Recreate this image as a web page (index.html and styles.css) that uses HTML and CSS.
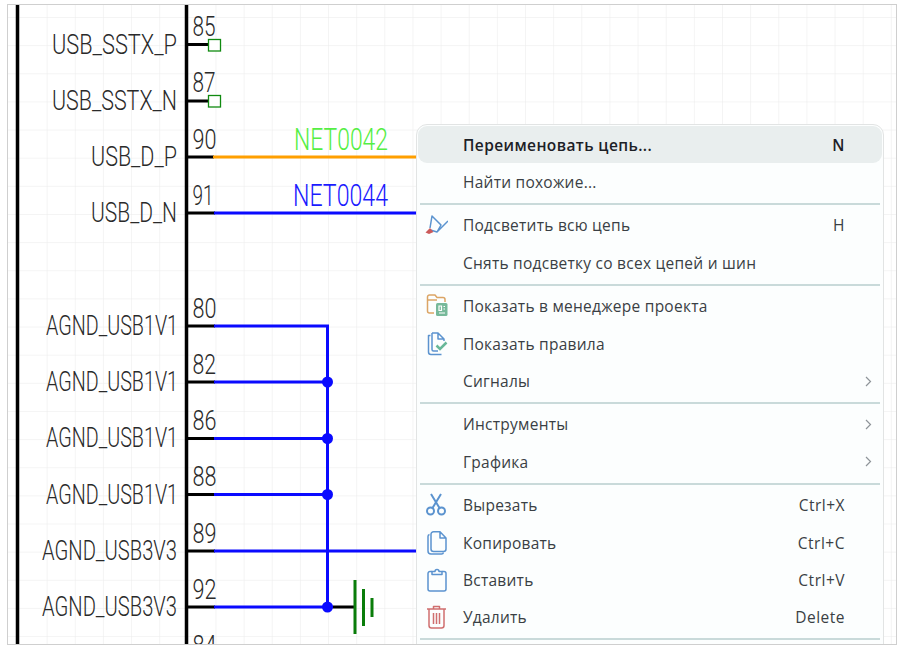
FILE: index.html
```html
<!DOCTYPE html>
<html lang="ru">
<head>
<meta charset="utf-8">
<title>Схема</title>
<link rel="stylesheet" href="styles.css">
</head>
<body>
<main class="frame">
  <svg class="sheet" viewBox="8 5 888 639" width="888" height="639" xmlns="http://www.w3.org/2000/svg">
    <defs>
      <pattern id="grid" patternUnits="userSpaceOnUse" x="18.5" y="17" width="28.14" height="28.14">
        <path class="grid-line" d="M0 0H28.14M0 0V28.14"/>
      </pattern>
    </defs>
    <rect x="8" y="5" width="888" height="639" fill="url(#grid)"/>
    <path class="bus" d="M17.5 5V644M186.5 5V644"/>
    <path class="pin" d="M188 44.5H209M188 101H209M188 157H214M188 213H215M188 326H215M188 382H215M188 438.500H215M188 494.500H215M188 551H215M188 607H215M333 607H354"/>
    <rect class="nc" x="208.500" y="39.500" width="12" height="11.500"/>
    <rect class="nc" x="208.500" y="95.500" width="12" height="11.500"/>
    <path class="wire-orange" d="M213 157H420"/>
    <path class="wire" d="M214 213H420M214 326H327.500V607M214 382H327.500M214 438.500H327.500M214 494.500H327.500M214 551H420M214 607H333"/>
    <circle class="dot" cx="327.500" cy="382" r="5.500"/>
    <circle class="dot" cx="327.500" cy="438.500" r="5.500"/>
    <circle class="dot" cx="327.500" cy="494.500" r="5.500"/>
    <circle class="dot" cx="327.500" cy="607" r="5.500"/>
    <path class="gnd" d="M355 580V634M363.500 589V626M372 598V617"/>

    <text class="cad" x="52" y="53.500" textLength="125" lengthAdjust="spacingAndGlyphs">USB_SSTX_P</text>
    <text class="cad" x="52" y="110" textLength="125" lengthAdjust="spacingAndGlyphs">USB_SSTX_N</text>
    <text class="cad" x="91" y="166" textLength="86" lengthAdjust="spacingAndGlyphs">USB_D_P</text>
    <text class="cad" x="91" y="222" textLength="86" lengthAdjust="spacingAndGlyphs">USB_D_N</text>
    <text class="cad" x="46" y="334.500" textLength="132" lengthAdjust="spacingAndGlyphs">AGND_USB1V1</text>
    <text class="cad" x="46" y="391" textLength="132" lengthAdjust="spacingAndGlyphs">AGND_USB1V1</text>
    <text class="cad" x="46" y="447" textLength="132" lengthAdjust="spacingAndGlyphs">AGND_USB1V1</text>
    <text class="cad" x="46" y="503.500" textLength="132" lengthAdjust="spacingAndGlyphs">AGND_USB1V1</text>
    <text class="cad" x="42" y="559.500" textLength="135" lengthAdjust="spacingAndGlyphs">AGND_USB3V3</text>
    <text class="cad" x="42" y="616" textLength="135" lengthAdjust="spacingAndGlyphs">AGND_USB3V3</text>

    <text class="cad" x="192.500" y="36" textLength="23" lengthAdjust="spacingAndGlyphs">85</text>
    <text class="cad" x="192.500" y="92" textLength="23" lengthAdjust="spacingAndGlyphs">87</text>
    <text class="cad" x="192.500" y="148.500" textLength="24" lengthAdjust="spacingAndGlyphs">90</text>
    <text class="cad" x="192.500" y="204.500" textLength="21" lengthAdjust="spacingAndGlyphs">91</text>
    <text class="cad" x="192.500" y="317.500" textLength="24" lengthAdjust="spacingAndGlyphs">80</text>
    <text class="cad" x="192.500" y="373.500" textLength="23.500" lengthAdjust="spacingAndGlyphs">82</text>
    <text class="cad" x="192.500" y="430" textLength="24" lengthAdjust="spacingAndGlyphs">86</text>
    <text class="cad" x="192.500" y="486" textLength="24" lengthAdjust="spacingAndGlyphs">88</text>
    <text class="cad" x="192.500" y="542.500" textLength="24" lengthAdjust="spacingAndGlyphs">89</text>
    <text class="cad" x="192.500" y="598.500" textLength="24" lengthAdjust="spacingAndGlyphs">92</text>
    <text class="cad" x="192.500" y="655" textLength="24" lengthAdjust="spacingAndGlyphs">84</text>

    <text class="cad net net-green" x="294" y="149.500" textLength="94" lengthAdjust="spacingAndGlyphs">NET0042</text>
    <text class="cad net net-blue" x="293" y="205.500" textLength="95" lengthAdjust="spacingAndGlyphs">NET0044</text>
  </svg>

  <nav class="menu">
    <div class="row row-active">
      <span class="slot"></span><span class="label">Переименовать цепь...</span><span class="key">N</span><span class="arrow"></span>
    </div>
    <div class="row">
      <span class="slot"></span><span class="label">Найти похожие...</span><span class="key"></span><span class="arrow"></span>
    </div>
    <div class="sep"></div>
    <div class="row">
      <span class="slot">
        <svg class="icon" viewBox="0 0 24 24" width="24" height="24">
          <path class="i-blue" d="M6 15L8 3L17 12L13 19M24 8L13 19L6.500 17"/>
          <path class="i-red-fill" d="M1.500 19.500L6 15L9.500 19L5 21Z"/>
        </svg>
      </span><span class="label">Подсветить всю цепь</span><span class="key">H</span><span class="arrow"></span>
    </div>
    <div class="row">
      <span class="slot"></span><span class="label">Снять подсветку со всех цепей и шин</span><span class="key"></span><span class="arrow"></span>
    </div>
    <div class="sep"></div>
    <div class="row">
      <span class="slot">
        <svg class="icon" viewBox="0 0 24 24" width="24" height="24">
          <path class="i-orange" d="M10 19H5.500A2 2 0 0 1 3.500 17V3A2 2 0 0 1 5.500 1H11L13 3.500H19A2 2 0 0 1 21 5.500V8M3.500 6H13"/>
          <rect class="i-green-fill" x="12" y="9" width="11.500" height="13" rx="1.500"/>
          <path class="i-white" d="M15 12V16.500H17.500V12ZM19.500 12.500H21M19.500 15H21M15 19H21"/>
        </svg>
      </span><span class="label">Показать в менеджере проекта</span><span class="key"></span><span class="arrow"></span>
    </div>
    <div class="row">
      <span class="slot">
        <svg class="icon" viewBox="0 0 24 24" width="24" height="24">
          <path class="i-blue" d="M6.500 3.500H4.500V20A2.500 2.500 0 0 0 7 22.500H17.500M8 1H14L20 7V9M8 1V17.500A1.500 1.500 0 0 0 9.500 19H14M14 1V7H20"/>
          <path class="i-green" d="M12.500 13.500L16 17L22.500 10.500"/>
        </svg>
      </span><span class="label">Показать правила</span><span class="key"></span><span class="arrow"></span>
    </div>
    <div class="row">
      <span class="slot"></span><span class="label">Сигналы</span><span class="key"></span>
      <span class="arrow"><svg viewBox="0 0 7 11" width="7" height="11"><path class="i-chevron" d="M1 1L5.500 5.500L1 10"/></svg></span>
    </div>
    <div class="sep"></div>
    <div class="row">
      <span class="slot"></span><span class="label">Инструменты</span><span class="key"></span>
      <span class="arrow"><svg viewBox="0 0 7 11" width="7" height="11"><path class="i-chevron" d="M1 1L5.500 5.500L1 10"/></svg></span>
    </div>
    <div class="row">
      <span class="slot"></span><span class="label">Графика</span><span class="key"></span>
      <span class="arrow"><svg viewBox="0 0 7 11" width="7" height="11"><path class="i-chevron" d="M1 1L5.500 5.500L1 10"/></svg></span>
    </div>
    <div class="sep"></div>
    <div class="row">
      <span class="slot">
        <svg class="icon" viewBox="0 0 24 24" width="24" height="24">
          <path class="i-blue-bold" d="M7 1L15.500 15M17 1L8.500 15"/>
          <circle class="i-blue-bold" cx="6.500" cy="18" r="3.500"/>
          <circle class="i-blue-bold" cx="17.500" cy="18" r="3.500"/>
        </svg>
      </span><span class="label">Вырезать</span><span class="key">Ctrl+X</span><span class="arrow"></span>
    </div>
    <div class="row">
      <span class="slot">
        <svg class="icon" viewBox="0 0 24 24" width="24" height="24">
          <path class="i-blue" d="M5.500 3.500A2 2 0 0 0 4 5.500V20A3 3 0 0 0 7 23H17.500A2 2 0 0 0 19.500 21.500"/>
          <path class="i-blue" d="M9.500 0.800H16L22 7V18A2.500 2.500 0 0 1 19.500 20.500H9.500A2.500 2.500 0 0 1 7 18V3.300A2.500 2.500 0 0 1 9.500 0.800ZM16 0.800V7H22"/>
        </svg>
      </span><span class="label">Копировать</span><span class="key">Ctrl+C</span><span class="arrow"></span>
    </div>
    <div class="row">
      <span class="slot">
        <svg class="icon" viewBox="0 0 24 24" width="24" height="24">
          <path class="i-blue" d="M8 3.500H6A2 2 0 0 0 4 5.500V21A2 2 0 0 0 6 23H20A2 2 0 0 0 22 21V5.500A2 2 0 0 0 20 3.500H18"/>
          <path class="i-blue" d="M8 6.500V3.500H11A2 2 0 0 1 15 3.500H18V6.500Z"/>
        </svg>
      </span><span class="label">Вставить</span><span class="key">Ctrl+V</span><span class="arrow"></span>
    </div>
    <div class="row">
      <span class="slot">
        <svg class="icon" viewBox="0 0 24 24" width="24" height="24">
          <path class="i-red" d="M5 4.500V20.500A2.500 2.500 0 0 0 7.500 23H17.500A2.500 2.500 0 0 0 20 20.500V4.500M3 4H22M9.500 4V1.500H15.500V4M9.500 8V19M12.500 8V19M15.500 8V19"/>
        </svg>
      </span><span class="label">Удалить</span><span class="key">Delete</span><span class="arrow"></span>
    </div>
    <div class="sep"></div>
  </nav>
</main>
</body>
</html>
```

FILE: styles.css
```css
html, body {
  margin: 0;
  padding: 0;
  background: #ffffff;
}

body {
  width: 909px;
  height: 652px;
  overflow: hidden;
}

.frame {
  position: relative;
  width: 888px;
  height: 639px;
  margin: 4px 0 0 7px;
  border: 1px solid #cfcfcf;
  overflow: hidden;
  background: #ffffff;
}

.sheet {
  display: block;
}

.grid-line {
  fill: none;
  stroke: #eaeaea;
  stroke-width: 1;
}

.bus {
  fill: none;
  stroke: #000000;
  stroke-width: 3.5;
}

.pin {
  fill: none;
  stroke: #000000;
  stroke-width: 3;
}

.wire {
  fill: none;
  stroke: #0a0aff;
  stroke-width: 3;
}

.wire-orange {
  fill: none;
  stroke: #ff9f00;
  stroke-width: 3;
}

.dot {
  fill: #0a0aff;
}

.nc {
  fill: #ffffff;
  stroke: #108a10;
  stroke-width: 1.300;
}

.gnd {
  fill: none;
  stroke: #0a7d0a;
  stroke-width: 3;
}

.cad {
  font-family: "Roboto", "Liberation Sans", sans-serif;
  font-weight: 300;
  font-size: 27.500px;
  fill: #2a2a2a;
}

.net {
  font-size: 31px;
}

.net-green {
  fill: #55ee44;
}

.net-blue {
  fill: #1a1aff;
}

.menu {
  position: absolute;
  left: 408px;
  top: 119px;
  width: 468px;
  padding: 1px 1px 40px;
  box-sizing: border-box;
  background: #fcfefe;
  border: 1px solid #e2e4e4;
  border-radius: 11px;
  font-family: "Open Sans", "Noto Sans", "Liberation Sans", sans-serif;
  font-size: 15.500px;
  letter-spacing: 0.250px;
  color: #3a3f44;
}

.row {
  display: flex;
  align-items: center;
  height: 37.400px;
  border-radius: 9px;
}

.row-active {
  background: #e9eeee;
  font-weight: 600;
  letter-spacing: 0.400px;
  color: #1c2026;
}

.slot {
  flex: none;
  display: flex;
  align-items: center;
  justify-content: flex-end;
  width: 31px;
  height: 24px;
  margin-right: 14px;
  box-sizing: border-box;
  padding-right: 1px;
}

.icon {
  display: block;
  width: 24px;
  height: 24px;
}

.label {
  flex: 1;
  white-space: nowrap;
}

.key {
  flex: none;
  text-align: right;
  letter-spacing: 0.500px;
}

.arrow {
  flex: none;
  display: flex;
  align-items: center;
  justify-content: flex-end;
  width: 37px;
  padding-right: 10px;
  box-sizing: border-box;
}

.sep {
  height: 2px;
  margin: 2px 2px;
  background: #c9dada;
}

.i-blue,
.i-blue-bold {
  fill: none;
  stroke: #5b93cf;
  stroke-width: 1.500;
  stroke-linejoin: round;
}

.i-blue-bold {
  stroke-width: 2;
}

.i-red {
  fill: none;
  stroke: #cf6f6f;
  stroke-width: 1.500;
  stroke-linejoin: round;
}

.i-red-fill {
  fill: #cb5a5a;
}

.i-orange {
  fill: none;
  stroke: #dba565;
  stroke-width: 1.500;
  stroke-linejoin: round;
}

.i-green {
  fill: none;
  stroke: #68b899;
  stroke-width: 2.500;
}

.i-green-fill {
  fill: #77b99a;
}

.i-white {
  fill: none;
  stroke: #ffffff;
  stroke-width: 1.200;
}

.i-chevron {
  fill: none;
  stroke: #8e9499;
  stroke-width: 1.200;
}
```
